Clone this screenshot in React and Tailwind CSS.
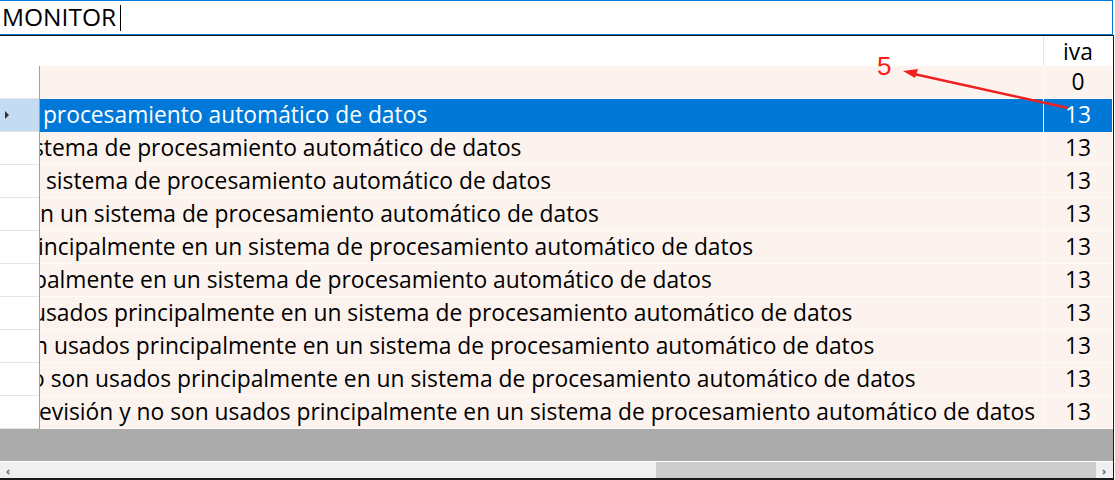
import React from 'react';

const rows = [
  { text: '', iva: '0', shift: 'ml-0' },
  { text: ' procesamiento automático de datos', iva: '13', shift: '-ml-[3px]', selected: true },
  { text: 'stema de procesamiento automático de datos', iva: '13', shift: '-ml-[7px]' },
  { text: 'n sistema de procesamiento automático de datos', iva: '13', shift: '-ml-[14px]' },
  { text: 'n un sistema de procesamiento automático de datos', iva: '13', shift: 'ml-0' },
  { text: 'incipalmente en un sistema de procesamiento automático de datos', iva: '13', shift: '-ml-[2px]' },
  { text: 'palmente en un sistema de procesamiento automático de datos', iva: '13', shift: '-ml-[7px]' },
  { text: 'usados principalmente en un sistema de procesamiento automático de datos', iva: '13', shift: '-ml-[8px]' },
  { text: 'n usados principalmente en un sistema de procesamiento automático de datos', iva: '13', shift: '-ml-[6px]' },
  { text: 'o son usados principalmente en un sistema de procesamiento automático de datos', iva: '13', shift: '-ml-[9px]' },
  { text: 'evisión y no son usados principalmente en un sistema de procesamiento automático de datos', iva: '13', shift: '-ml-[1px]' },
];

const font = { fontFamily: '"Open Sans", "Noto Sans", sans-serif' };

const GridRow = ({ row }) => {
  const sel = row.selected;
  return (
    <div className="flex h-[33px]">
      <div className={`w-[39px] shrink-0 border-b border-[#e4e4e4] flex items-center pl-[5px] ${sel ? 'bg-[#c4dcf2]' : 'bg-white'}`}>
        {sel && <span className="w-0 h-0 border-y-[4px] border-y-transparent border-l-[4px] border-l-[#333]" />}
      </div>
      <div className="w-[1px] shrink-0 bg-[#a0a0a0]" />
      <div className={`w-[1003px] shrink-0 overflow-hidden border-b flex items-center ${sel ? 'bg-[#0078d7] text-white border-[#0078d7]' : 'bg-[#fdf3ee] text-black border-[#fffaf7]'}`}>
        <span className={`whitespace-pre text-[22.8px] leading-none pt-[1px] ${row.shift}`}>{row.text}</span>
      </div>
      <div className={`w-[1px] shrink-0 ${sel ? 'bg-white' : 'bg-[#fffaf7]'}`} />
      <div className={`w-[68px] shrink-0 border-b flex items-center justify-center text-[22.8px] leading-none pt-[1px] ${sel ? 'bg-[#0078d7] text-white border-[#0078d7]' : 'bg-[#fdf3ee] text-black border-[#fffaf7]'}`}>
        {row.iva}
      </div>
    </div>
  );
};

export default function App() {
  return (
    <div className="w-[1115px] h-[480px] bg-white overflow-hidden relative" style={font}>
      <div className="w-[1113px] h-[35px] border-t border-b border-r border-[#0078d7] flex items-center pl-[2px]">
        <span className="text-[24.5px] leading-none text-black">MONITOR</span>
        <span className="ml-[4px] w-[1px] h-[26px] bg-black" />
      </div>
      <div className="w-[1114px] h-[445px] border-t border-r border-b-2 border-[#1a1a1a] flex flex-col">
        <div className="flex h-[30px] shrink-0 bg-white">
          <div className="w-[1043px] shrink-0" />
          <div className="w-[1px] shrink-0 bg-[#e4e4e4]" />
          <div className="w-[68px] shrink-0 flex items-center justify-center text-[22.8px] leading-none pt-[2px]">iva</div>
        </div>
        {rows.map((r, i) => (
          <GridRow key={i} row={r} />
        ))}
        <div className="flex-1 bg-[#ababab]" />
        <div className="h-[1px] bg-white" />
        <div className="h-[16px] shrink-0 bg-[#f0f0f0] flex items-center">
          <span className="w-[16px] text-center text-[11px] leading-none text-[#606060] font-bold">‹</span>
          <div className="w-[640px]" />
          <div className="w-[440px] h-full bg-[#cdcdcd]" />
          <span className="w-[16px] text-center text-[11px] leading-none text-[#606060] font-bold">›</span>
        </div>
      </div>
      <span className="absolute left-[877px] top-[53px] text-[26px] leading-none text-[#ff1a1a]" style={{ fontFamily: '"Liberation Sans", sans-serif' }}>5</span>
      <svg className="absolute left-0 top-0" width="1115" height="480">
        <line x1="1068" y1="108" x2="914" y2="74" stroke="#f02020" strokeWidth="2.5" />
        <polygon points="903,71 918,69 915,78" fill="#f02020" />
      </svg>
    </div>
  );
}
